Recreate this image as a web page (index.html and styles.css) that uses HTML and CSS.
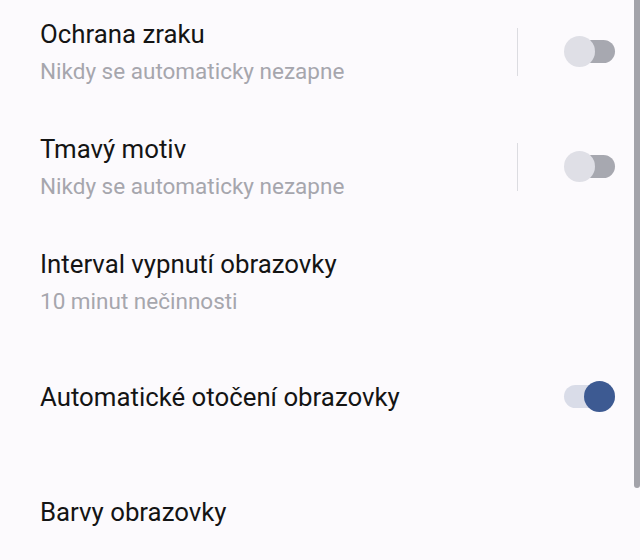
FILE: index.html
```html
<!DOCTYPE html>
<html lang="cs">
	<head>
		<meta charset="UTF-8">
		<meta content="width=device-width, initial-scale=1.0" name="viewport">
		<link rel="stylesheet" href="styles.css">
		<title>Displej</title>
	</head>
	<body>
		<div class="settings-list">
			<div class="setting-row">
				<div class="setting-text">
					<div class="setting-title">Ochrana zraku</div>
					<div class="setting-summary">Nikdy se automaticky nezapne</div>
				</div>
				<div class="divider"></div>
				<div class="switch"><span class="thumb"></span></div>
			</div>

			<div class="setting-row">
				<div class="setting-text">
					<div class="setting-title">Tmavý motiv</div>
					<div class="setting-summary">Nikdy se automaticky nezapne</div>
				</div>
				<div class="divider"></div>
				<div class="switch"><span class="thumb"></span></div>
			</div>

			<div class="setting-row">
				<div class="setting-text">
					<div class="setting-title">Interval vypnutí obrazovky</div>
					<div class="setting-summary">10 minut nečinnosti</div>
				</div>
			</div>

			<div class="setting-row">
				<div class="setting-text">
					<div class="setting-title">Automatické otočení obrazovky</div>
				</div>
				<div class="switch on"><span class="thumb"></span></div>
			</div>

			<div class="setting-row">
				<div class="setting-text">
					<div class="setting-title">Barvy obrazovky</div>
				</div>
			</div>
		</div>
		<div class="scrollbar"></div>
	</body>
</html>
```

FILE: styles.css
```css
body {
    margin: 0;
    height: 560px;
    overflow: hidden;
    background-color: #FCFAFD;
    font-family: Roboto, 'Noto Sans', sans-serif;
}

.settings-list {
    display: flex;
    flex-direction: column;
    margin-top: -6px;
}

.setting-row {
    display: flex;
    align-items: center;
    height: 115px;
    padding: 0 25px 0 40px;
}

.setting-text {
    flex: 1;
    display: flex;
    flex-direction: column;
}

.setting-title {
    font-size: 25.8px;
    line-height: 30px;
    color: #141414;
}

.setting-summary {
    margin-top: 8px;
    font-size: 22.5px;
    line-height: 28px;
    color: #A6A6AD;
}

.divider {
    width: 1px;
    height: 48px;
    margin-right: 46px;
    background-color: #DCDCE1;
}

.switch {
    position: relative;
    width: 44px;
    height: 23px;
    margin-left: 7px;
    border-radius: 12px;
    background-color: #A7A8B0;
}

.switch .thumb {
    position: absolute;
    top: -4px;
    left: -7px;
    width: 31px;
    height: 31px;
    border-radius: 50%;
    background-color: #DFDFE6;
}

.switch.on {
    width: 51px;
    margin-left: 0;
    background-color: #D9DCE8;
}

.switch.on .thumb {
    left: auto;
    right: 0;
    background-color: #3D5A92;
}

.scrollbar {
    position: absolute;
    top: 0;
    right: 0;
    width: 6px;
    height: 488px;
    border-radius: 0 0 3px 3px;
    background-color: #A3A3AA;
}
```
